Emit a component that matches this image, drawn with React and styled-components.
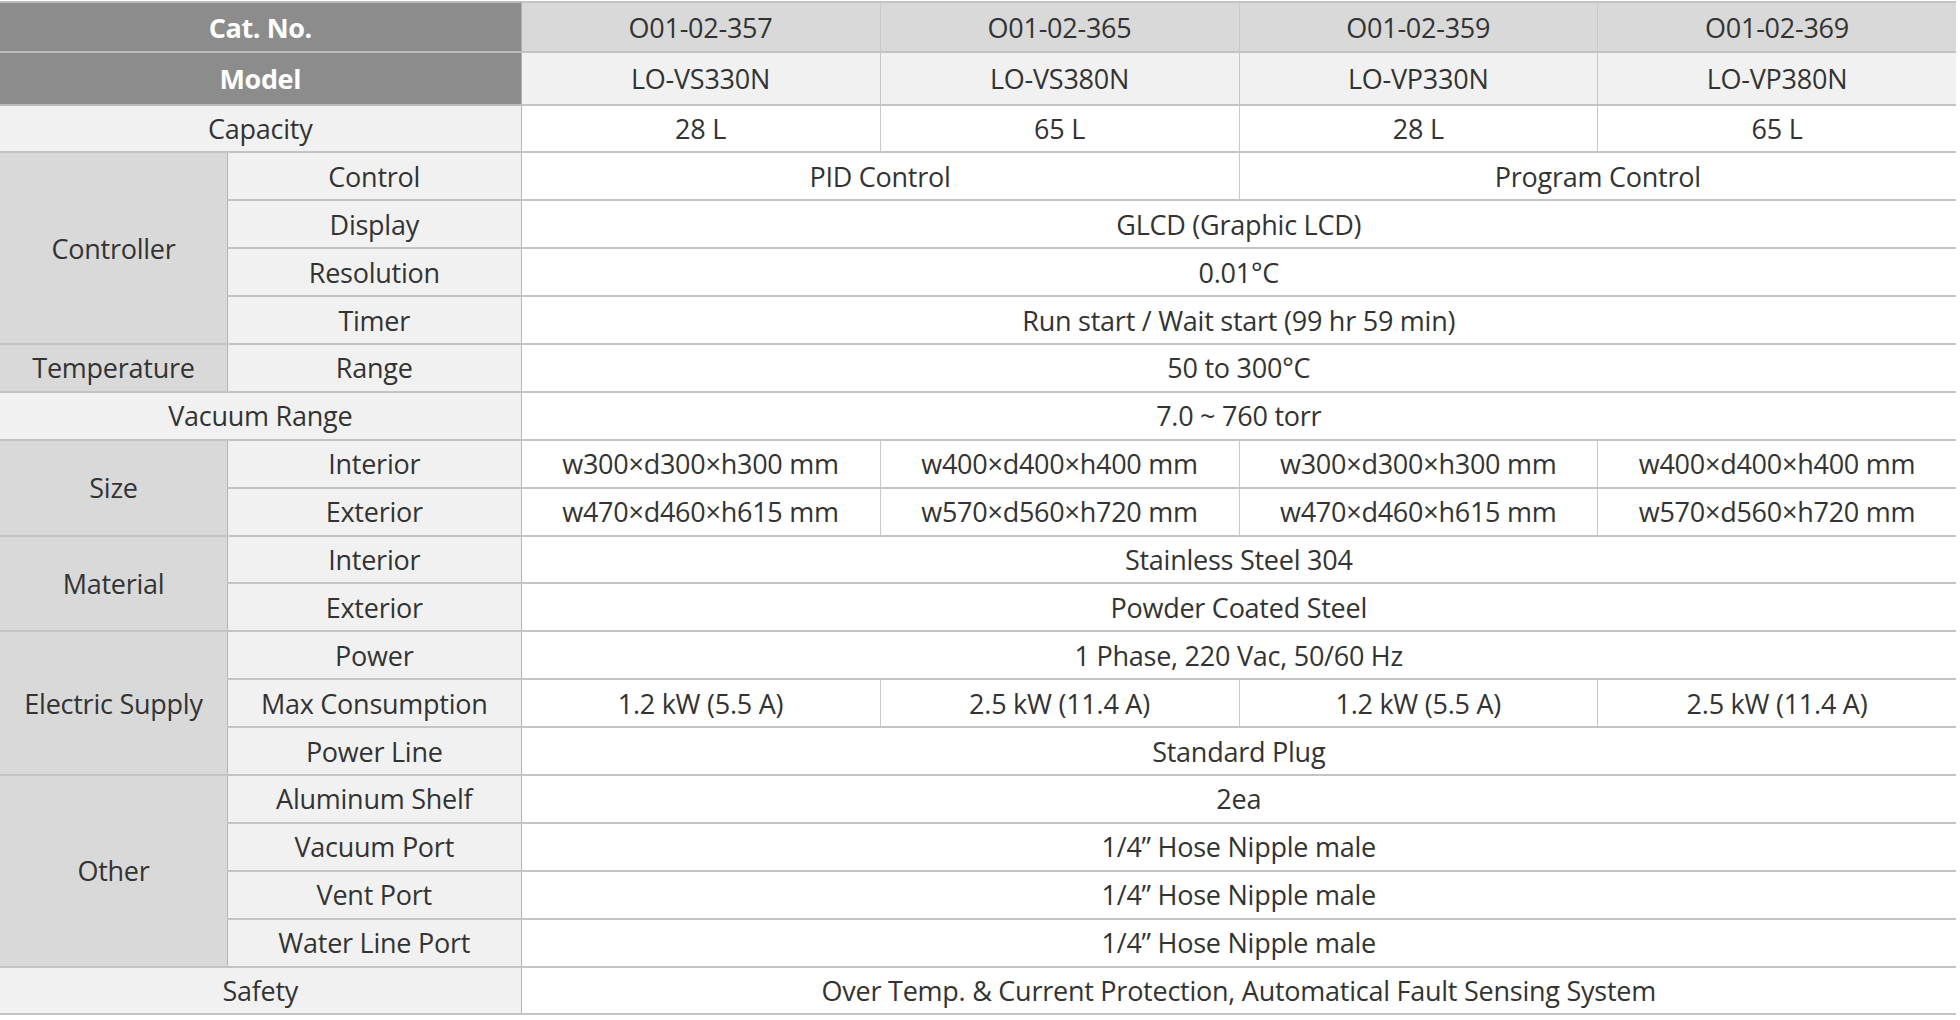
import React from 'react';
import styled, { createGlobalStyle } from 'styled-components';

const GlobalStyle = createGlobalStyle`
  html, body {
    margin: 0;
    padding: 0;
    background: #ffffff;
  }
  body {
    font-family: "Open Sans", "Noto Sans", "Liberation Sans", sans-serif;
  }
`;

const Page = styled.div`
  width: 1960px;
  padding-top: 1px;
`;

const SpecTable = styled.table`
  width: 1956px;
  border-collapse: collapse;
  table-layout: fixed;
  font-size: 27px;
  letter-spacing: -0.25px;
  color: #333333;
  border-top: 2px solid #c2c2c2;
`;

const Row = styled.tr`
  height: ${({ $h }) => $h || 47.9}px;
`;

const Cell = styled.td`
  padding: 0 6px;
  text-align: center;
  vertical-align: middle;
  white-space: nowrap;
  border-top: 2px solid #c4c4c4;
  border-bottom: 2px solid #c4c4c4;
  border-left: 1px solid #c8c8c8;
  border-right: 1px solid #c8c8c8;
  background: #ffffff;
  line-height: 1;
  &:first-child {
    border-left: none;
  }
  &:last-child {
    border-right: none;
  }
`;

const HeadCell = styled(Cell)`
  background: #8c8c8c;
  color: #ffffff;
  font-weight: 700;
  letter-spacing: -0.4px;
  border-right: 1px solid #b0b0b0;
  border-top-color: #bcbcbc;
  border-bottom-color: #bcbcbc;
`;

const HeadValue = styled(Cell)`
  background: ${({ $dark }) => ($dark ? '#d9d9d9' : '#f1f1f1')};
`;

const GroupCell = styled(Cell)`
  background: #d9d9d9;
  border-right: 1px solid #b4b4b4;
`;

const LabelCell = styled(Cell)`
  background: #f1f1f1;
  border-right: 1px solid #b4b4b4;
`;

const catNos = ['O01-02-357', 'O01-02-365', 'O01-02-359', 'O01-02-369'];
const models = ['LO-VS330N', 'LO-VS380N', 'LO-VP330N', 'LO-VP380N'];
const capacities = ['28 L', '65 L', '28 L', '65 L'];

const nipple = '1/4\u201D Hose Nipple male';

// each row: group (+ span) only on the first row of a group, label, values [text, colspan]
const specRows = [
  { group: 'Controller', span: 4, label: 'Control', values: [['PID Control', 2], ['Program Control', 2]] },
  { label: 'Display', values: [['GLCD (Graphic LCD)', 4]] },
  { label: 'Resolution', values: [['0.01°C', 4]] },
  { label: 'Timer', values: [['Run start / Wait start (99 hr 59 min)', 4]] },
  { group: 'Temperature', span: 1, label: 'Range', values: [['50 to 300°C', 4]] },
  { full: 'Vacuum Range', values: [['7.0 ~ 760 torr', 4]] },
  {
    group: 'Size', span: 2, label: 'Interior',
    values: [['w300×d300×h300 mm', 1], ['w400×d400×h400 mm', 1], ['w300×d300×h300 mm', 1], ['w400×d400×h400 mm', 1]],
  },
  {
    label: 'Exterior',
    values: [['w470×d460×h615 mm', 1], ['w570×d560×h720 mm', 1], ['w470×d460×h615 mm', 1], ['w570×d560×h720 mm', 1]],
  },
  { group: 'Material', span: 2, label: 'Interior', values: [['Stainless Steel 304', 4]] },
  { label: 'Exterior', values: [['Powder Coated Steel', 4]] },
  { group: 'Electric Supply', span: 3, label: 'Power', values: [['1 Phase, 220 Vac, 50/60 Hz', 4]] },
  {
    label: 'Max Consumption',
    values: [['1.2 kW (5.5 A)', 1], ['2.5 kW (11.4 A)', 1], ['1.2 kW (5.5 A)', 1], ['2.5 kW (11.4 A)', 1]],
  },
  { label: 'Power Line', values: [['Standard Plug', 4]] },
  { group: 'Other', span: 4, label: 'Aluminum Shelf', values: [['2ea', 4]] },
  { label: 'Vacuum Port', values: [[nipple, 4]] },
  { label: 'Vent Port', values: [[nipple, 4]] },
  { label: 'Water Line Port', values: [[nipple, 4]] },
  { full: 'Safety', values: [['Over Temp. & Current Protection, Automatical Fault Sensing System', 4]] },
];

const App = () => {
  return (
    <Page>
      <GlobalStyle />
      <SpecTable>
        <colgroup>
          <col style={{ width: '227.5px' }} />
          <col style={{ width: '293.5px' }} />
          <col style={{ width: '359px' }} />
          <col style={{ width: '359px' }} />
          <col style={{ width: '358.5px' }} />
          <col style={{ width: '358.5px' }} />
        </colgroup>
        <tbody>
          <Row $h={50}>
            <HeadCell colSpan={2}>Cat. No.</HeadCell>
            {catNos.map((c, i) => (
              <HeadValue key={i} $dark>{c}</HeadValue>
            ))}
          </Row>
          <Row $h={52.5}>
            <HeadCell colSpan={2}>Model</HeadCell>
            {models.map((m, i) => (
              <HeadValue key={i}>{m}</HeadValue>
            ))}
          </Row>
          <Row>
            <LabelCell colSpan={2}>Capacity</LabelCell>
            {capacities.map((c, i) => (
              <Cell key={i}>{c}</Cell>
            ))}
          </Row>
          {specRows.map((r, i) => (
            <Row key={i}>
              {r.full ? (
                <LabelCell colSpan={2}>{r.full}</LabelCell>
              ) : (
                <>
                  {r.group && <GroupCell rowSpan={r.span}>{r.group}</GroupCell>}
                  <LabelCell>{r.label}</LabelCell>
                </>
              )}
              {r.values.map(([text, span], j) => (
                <Cell key={j} colSpan={span}>{text}</Cell>
              ))}
            </Row>
          ))}
        </tbody>
      </SpecTable>
    </Page>
  );
};

export default App;
